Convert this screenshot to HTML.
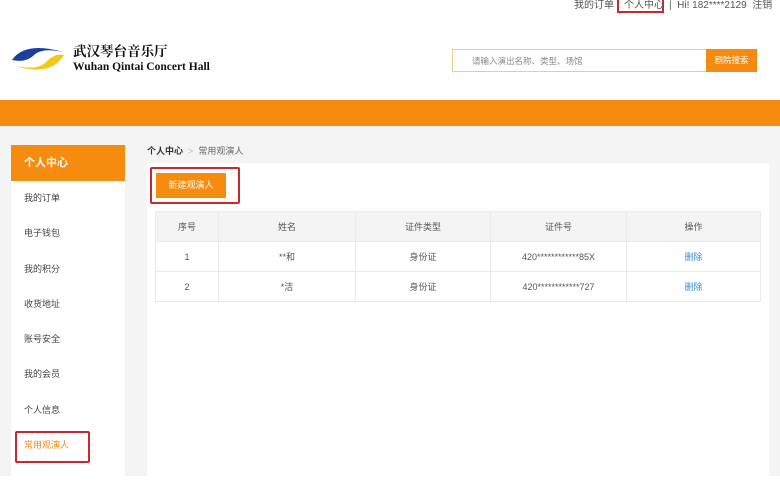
<!DOCTYPE html>
<html><head><meta charset="utf-8"><style>
*{margin:0;padding:0;box-sizing:border-box}
body{width:780px;height:496px;overflow:hidden;background:#fff;font-family:"Liberation Sans","Noto Sans CJK SC",sans-serif;font-size:9px;color:#555;position:relative}
.a{position:absolute;white-space:nowrap}
table{border-collapse:collapse;position:absolute;left:155px;top:211px;width:606px}
td{border:1px solid #eaeaea;height:30px;text-align:center;font-size:9px;color:#555}
tr.h td{background:#f4f4f4}
.side div{height:35.3px;line-height:35px;padding-left:13px;font-size:9px;color:#444}
</style></head><body>
<div class="a" style="left:574px;top:-4px;font-size:10px;color:#555">我的订单</div>
<div class="a" style="left:617px;top:-6px;width:47px;height:19px;border:2px solid #c8282e;border-top:none;font-size:10px;color:#555;padding:2px 0 0 5px">个人中心</div>
<div class="a" style="left:669px;top:-4px;font-size:10px;color:#555">|&nbsp; Hi! 182****2129 &nbsp;注销</div>
<svg class="a" style="left:11px;top:43px" width="54" height="31" viewBox="0 0 54 31">
<path d="M1 17 Q14 -2 52 9 Q30 4 22 13 Q14 20 1 17Z" fill="#1b3f9a"/>
<path d="M53 12 Q40 34 4 23 Q28 28 36 18 Q44 10 53 12Z" fill="#f2c81b"/>
</svg>
<div class="a" style="left:73px;top:42px;font-family:'Noto Serif CJK SC',serif;font-size:13.5px;font-weight:bold;color:#111;line-height:16px">武汉琴台音乐厅</div>
<div class="a" style="left:73px;top:60px;font-family:'Liberation Serif',serif;font-size:11.5px;font-weight:bold;color:#111;line-height:14px">Wuhan Qintai Concert Hall</div>
<div class="a" style="left:452px;top:49px;width:255px;height:23px;border:1px solid #f0c890;background:#fff"></div>
<div class="a" style="left:472px;top:55px;font-size:8.5px;color:#888">请输入演出名称、类型、场馆</div>
<div class="a" style="left:706px;top:49px;width:51px;height:23px;background:#f48a10;color:#fff;font-size:8.5px;text-align:center;line-height:23px">剧院搜索</div>
<div class="a" style="left:0;top:100px;width:780px;height:26px;background:#f68c0f"></div>
<div class="a" style="left:0;top:126px;width:780px;height:350px;background:#f4f4f4"></div>
<div class="a side" style="left:11px;top:145px;width:114px;height:331px;background:#fff">
<div style="background:#f68c0f;color:#fff;font-size:11px;font-weight:bold;height:36px;line-height:36px;padding-left:13px">个人中心</div>
<div>我的订单</div><div>电子钱包</div><div>我的积分</div><div>收货地址</div><div>账号安全</div><div>我的会员</div><div>个人信息</div><div style="color:#f08a20">常用观演人</div>
</div>
<div class="a" style="left:15px;top:431px;width:75px;height:32px;border:2px solid #c8282e;border-radius:2px"></div>
<div class="a" style="left:147px;top:144px;font-size:9px;color:#333"><b>个人中心</b> <span style="color:#bbb">&nbsp;&gt;&nbsp;</span> <span style="color:#666">常用观演人</span></div>
<div class="a" style="left:147px;top:163px;width:622px;height:313px;background:#fff"></div>
<div class="a" style="left:150px;top:167px;width:90px;height:37px;border:2px solid #c8282e;border-radius:2px"></div>
<div class="a" style="left:156px;top:173px;width:70px;height:25px;background:#f68c0f;color:#fff;font-size:9px;text-align:center;line-height:25px">新建观演人</div>
<table>
<tr class="h"><td style="width:63px">序号</td><td style="width:137px">姓名</td><td style="width:135px">证件类型</td><td style="width:136px">证件号</td><td>操作</td></tr>
<tr><td>1</td><td>**和</td><td>身份证</td><td>420************85X</td><td style="color:#3b8ee0">删除</td></tr>
<tr><td>2</td><td>*洁</td><td>身份证</td><td>420************727</td><td style="color:#3b8ee0">删除</td></tr>
</table>
</body></html>
